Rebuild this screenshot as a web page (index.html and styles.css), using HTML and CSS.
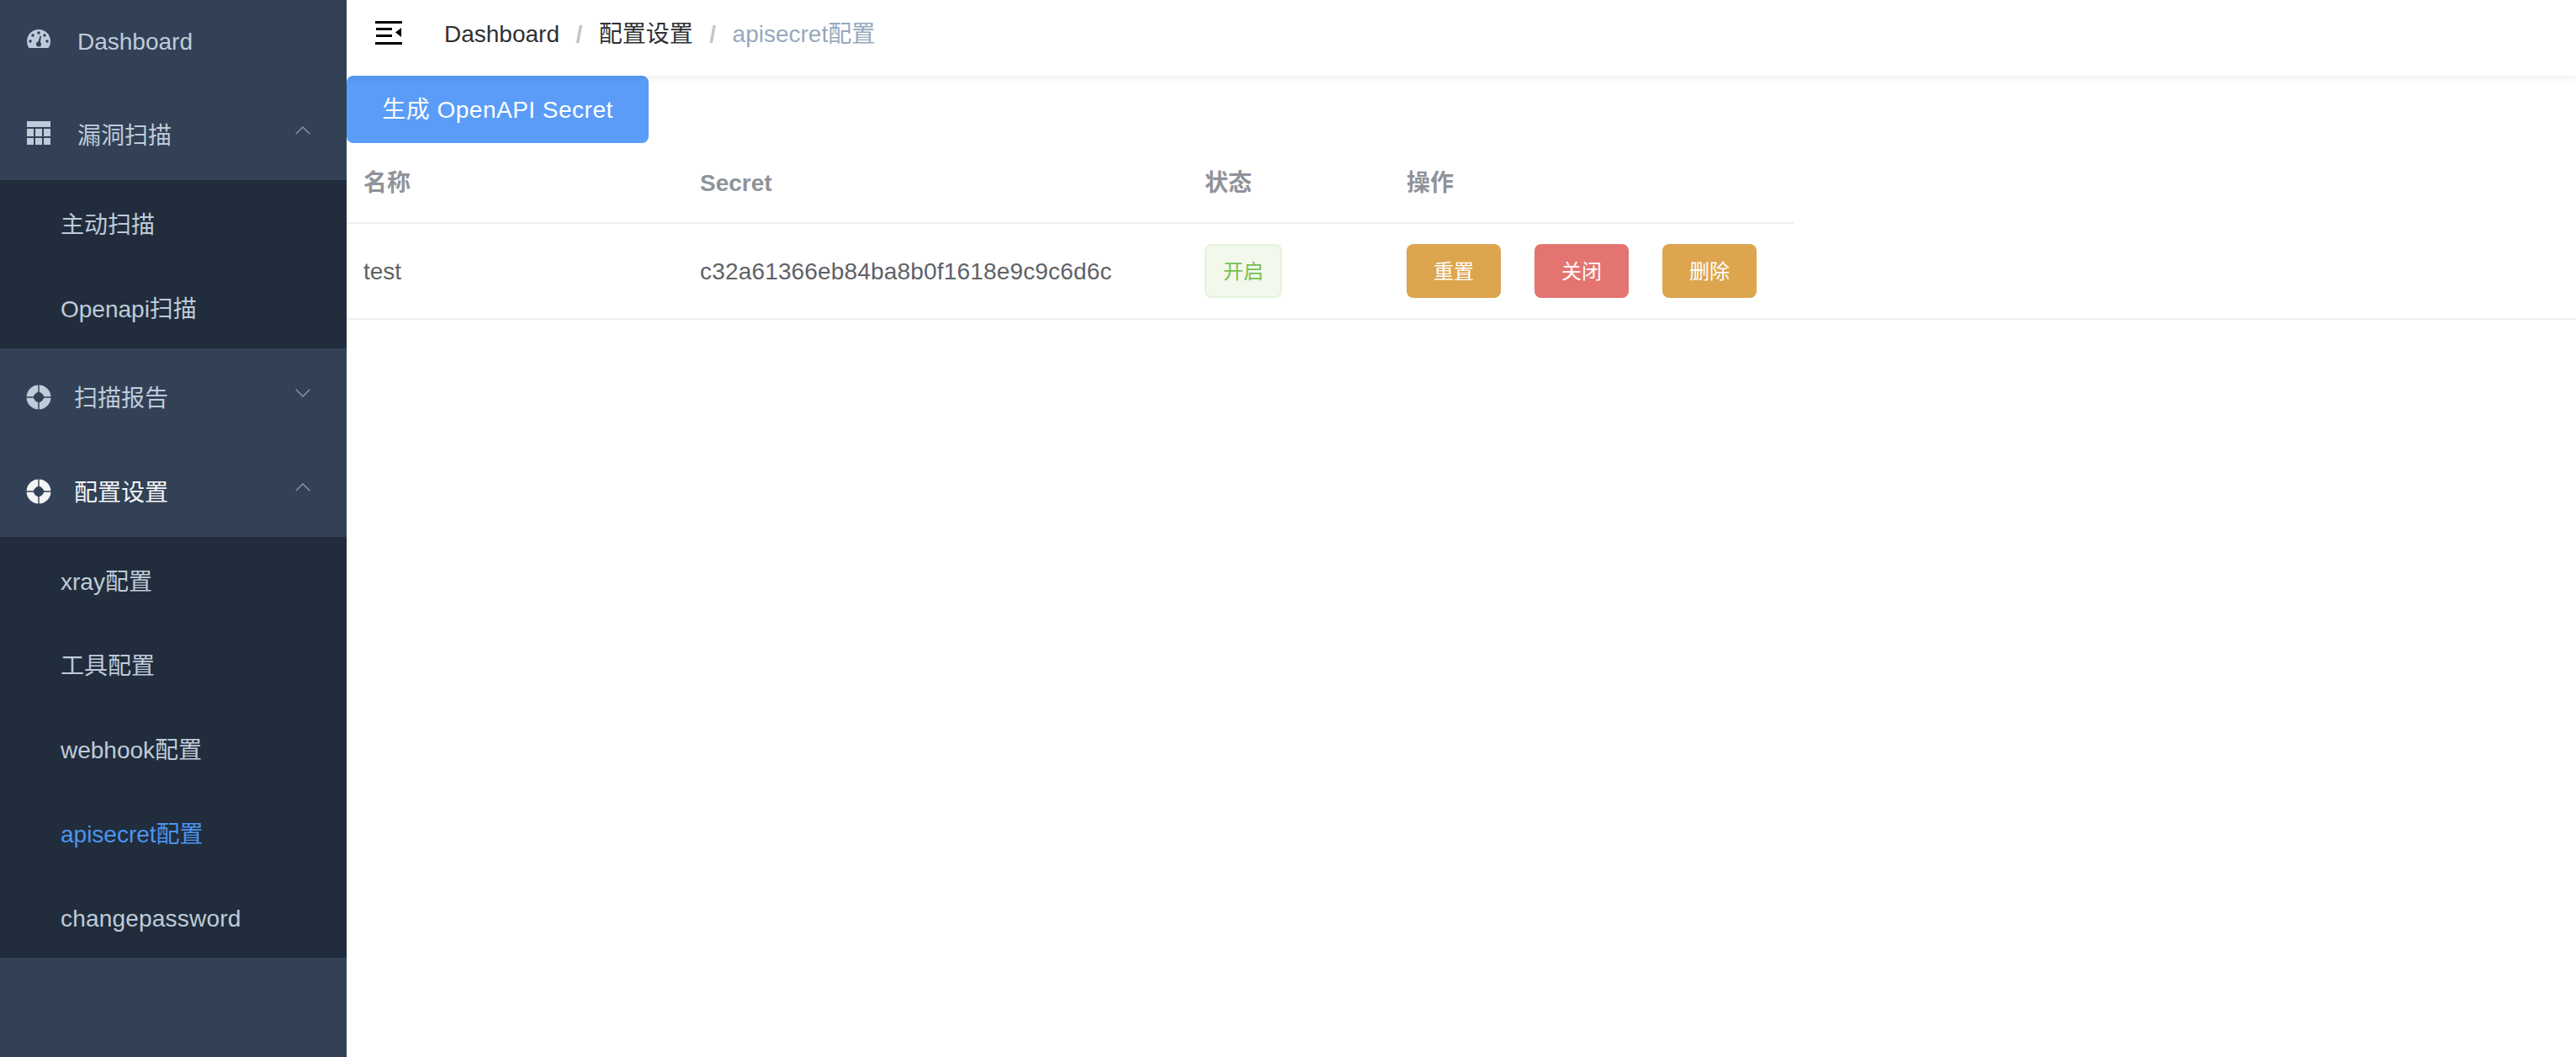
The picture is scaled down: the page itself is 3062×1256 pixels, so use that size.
FILE: index.html
```html
<!DOCTYPE html>
<html lang="zh">
<head>
<meta charset="utf-8">
<title>apisecret配置</title>
<link rel="stylesheet" href="styles.css">
</head>
<body>
<div class="app">
  <aside class="sidebar">
    <nav class="menu">
      <a class="menu-item">
        <svg class="icon icon-gauge" viewBox="0 0 28 22"><path class="solid" d="M2.500 22A14 14 0 1 1 25.500 22Z"/><g class="cut"><circle cx="7" cy="7" r="1.800"/><circle cx="14" cy="4" r="1.800"/><circle cx="21" cy="7" r="1.800"/><circle cx="4" cy="14" r="1.800"/><circle cx="24" cy="14" r="1.800"/><circle cx="14" cy="17.500" r="3"/><path d="M13 16 15.600 7.500 17 8 15.600 17Z"/></g></svg>
        <span class="label">Dashboard</span>
      </a>
      <a class="menu-item">
        <svg class="icon icon-table" viewBox="0 0 28 28"><path class="solid" d="M0 0H28V7H0ZM0 9H8V18H0ZM10 9H18V18H10ZM20 9H28V18H20ZM0 20H8V28H0ZM10 20H18V28H10ZM20 20H28V28H20Z"/></svg>
        <span class="label">漏洞扫描</span>
        <svg class="chevron" viewBox="0 0 18 10"><path d="M.7 9.300 9 1 17.300 9.300"/></svg>
      </a>
      <div class="submenu">
        <a class="sub-item">主动扫描</a>
        <a class="sub-item">Openapi扫描</a>
      </div>
      <a class="menu-item">
        <svg class="icon icon-ring" viewBox="0 0 30 30"><path class="solid" fill-rule="evenodd" d="M15 .5a14.500 14.500 0 1 0 0 29 14.500 14.500 0 0 0 0-29ZM15 8.500Q20 10 21.500 15 20 20 15 21.500 10 20 8.500 15 10 10 15 8.500Z"/><path class="cut-line" d="M0 15H9.500M20.500 15H30M15 0V9.500M15 20.500V30"/></svg>
        <span class="label">扫描报告</span>
        <svg class="chevron" viewBox="0 0 18 10"><path d="M.7.7 9 9 17.300.7"/></svg>
      </a>
      <a class="menu-item open">
        <svg class="icon icon-ring" viewBox="0 0 30 30"><path class="solid" fill-rule="evenodd" d="M15 .5a14.500 14.500 0 1 0 0 29 14.500 14.500 0 0 0 0-29ZM15 8.500Q20 10 21.500 15 20 20 15 21.500 10 20 8.500 15 10 10 15 8.500Z"/><path class="cut-line" d="M0 15H9.500M20.500 15H30M15 0V9.500M15 20.500V30"/></svg>
        <span class="label">配置设置</span>
        <svg class="chevron" viewBox="0 0 18 10"><path d="M.7 9.300 9 1 17.300 9.300"/></svg>
      </a>
      <div class="submenu">
        <a class="sub-item">xray配置</a>
        <a class="sub-item">工具配置</a>
        <a class="sub-item">webhook配置</a>
        <a class="sub-item current">apisecret配置</a>
        <a class="sub-item wide">changepassword</a>
      </div>
    </nav>
  </aside>
  <main class="main">
    <header class="topbar">
      <svg class="hamburger" viewBox="0 0 32 28"><path d="M0 0H32V3H0ZM1 8H20V11H1ZM1 16H20V19H1ZM0 25H32V28H0ZM31 8V19L24 13.500Z"/></svg>
      <ol class="crumbs">
        <li class="crumb">Dashboard</li>
        <li class="sep">/</li>
        <li class="crumb">配置设置</li>
        <li class="sep">/</li>
        <li class="crumb last">apisecret配置</li>
      </ol>
    </header>
    <div class="content">
      <button class="primary-btn">生成 OpenAPI Secret</button>
      <div class="table-wrap">
        <table class="data-table">
          <colgroup><col class="c-name"><col class="c-secret"><col class="c-state"><col class="c-ops"></colgroup>
          <thead>
            <tr><th>名称</th><th>Secret</th><th>状态</th><th>操作</th></tr>
          </thead>
          <tbody>
            <tr>
              <td class="plain">test</td>
              <td class="plain secret">c32a61366eb84ba8b0f1618e9c9c6d6c</td>
              <td><span class="tag">开启</span></td>
              <td><div class="ops"><button class="op warning">重置</button><button class="op danger">关闭</button><button class="op warning">删除</button></div></td>
            </tr>
          </tbody>
        </table>
      </div>
    </div>
  </main>
</div>
</body>
</html>
```

FILE: styles.css
```css
* { box-sizing: border-box; }
html, body { margin: 0; height: 100%; overflow: hidden; }
body {
  font-family: "Liberation Sans", "Noto Sans CJK SC", sans-serif;
  line-height: 40px;
  background: #fff;
  color: #606266;
}
.app { display: flex; height: 1256px; }

/* Sidebar */
.sidebar { width: 412px; flex: none; background: #324156; overflow: hidden; }
.menu { display: flex; flex-direction: column; margin-top: -10px; }
.menu-item {
  height: 112px;
  display: flex;
  align-items: center;
  padding: 0 43px 0 32px;
  font-size: 28px;
  color: #bfcbd9;
}
.menu-item.open { color: #f4f4f5; }
.label { flex: 1; padding-top: 8px; }
.icon { flex: none; display: block; margin-right: 32px; }
.icon-gauge { width: 28px; height: 22px; margin-top: -1px; }
.icon-table { width: 28px; height: 28px; }
.icon-ring { width: 30px; height: 30px; margin: 4px 27px 0 -1px; }
.solid { fill: currentColor; }
.cut { fill: #324156; }
.cut-line { stroke: #324156; stroke-width: 1.4; fill: none; }
.chevron { width: 18px; height: 10px; flex: none; fill: none; stroke: #8a929e; stroke-width: 1.5; margin-top: -6px; }
.submenu { background: #212d3c; display: flex; flex-direction: column; }
.sub-item {
  height: 100px;
  display: flex;
  align-items: center;
  padding: 8px 0 0 72px;
  font-size: 28px;
  color: #bfcbd9;
}
.sub-item.current { color: #4d94ef; }
.sub-item.wide { letter-spacing: .2px; }

/* Main */
.main { flex: 1; min-width: 0; }
.topbar {
  height: 90px;
  display: flex;
  align-items: center;
  padding-left: 34px;
  position: relative;
  box-shadow: 0 2px 8px rgba(0, 21, 41, .08);
}
.hamburger { width: 32px; height: 28px; flex: none; fill: #000; margin-top: -12px; }
.crumbs { list-style: none; display: flex; margin: -9px 0 0 50px; padding: 0; font-size: 28px; color: #303133; }
.sep { margin: 0 19.5px; color: #c0c4cc; font-weight: 700; }
.last { color: #97a8be; }

/* Content */
.content { display: flex; flex-direction: column; align-items: flex-start; }
.primary-btn {
  height: 80px;
  width: 359px;
  border: 0;
  border-radius: 8px;
  background: #5a9cf8;
  color: #fff;
  font: inherit;
  font-size: 28px;
  letter-spacing: .5px;
  padding: 2px 0 0;
}
.table-wrap { width: 100%; border-bottom: 2px solid #eeeef5; }
.data-table { width: 1720px; table-layout: fixed; border-collapse: separate; border-spacing: 0; font-size: 28px; }
.c-name { width: 400px; }
.c-secret { width: 600px; }
.c-state { width: 240px; }
.c-ops { width: 480px; }
.data-table th {
  height: 96px;
  padding: 2px 20px 0;
  text-align: left;
  font-weight: 700;
  color: #909399;
  border-bottom: 2px solid #eeeef5;
}
.data-table td { height: 112px; padding: 0 20px; color: #606266; }
.data-table td.plain { padding-top: 2px; }
.secret { letter-spacing: .17px; }
.tag {
  display: block;
  width: 92px;
  height: 64px;
  line-height: 62px;
  text-align: center;
  font-size: 24px;
  color: #78c050;
  background: #f2f8ec;
  border: 2px solid #e5f3da;
  border-radius: 8px;
}
.ops { display: flex; gap: 40px; }
.op {
  width: 112px;
  height: 64px;
  padding: 2px 0 0;
  border: 0;
  border-radius: 8px;
  color: #fff;
  font: inherit;
  font-size: 24px;
}
.warning { background: #dca54e; }
.danger { background: #e47470; }
```
